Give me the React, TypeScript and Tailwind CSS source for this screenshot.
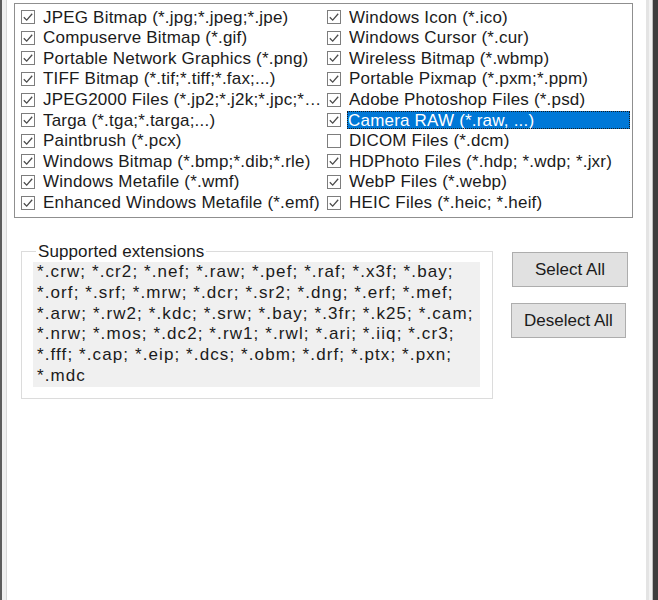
import React from "react";

const leftItems = [
  { label: "JPEG Bitmap (*.jpg;*.jpeg;*.jpe)", checked: true },
  { label: "Compuserve Bitmap (*.gif)", checked: true },
  { label: "Portable Network Graphics (*.png)", checked: true },
  { label: "TIFF Bitmap (*.tif;*.tiff;*.fax;...)", checked: true },
  { label: "JPEG2000 Files (*.jp2;*.j2k;*.jpc;*.jpf;*.jpx)", checked: true },
  { label: "Targa (*.tga;*.targa;...)", checked: true },
  { label: "Paintbrush (*.pcx)", checked: true },
  { label: "Windows Bitmap (*.bmp;*.dib;*.rle)", checked: true },
  { label: "Windows Metafile (*.wmf)", checked: true },
  { label: "Enhanced Windows Metafile (*.emf)", checked: true },
];

const rightItems = [
  { label: "Windows Icon (*.ico)", checked: true },
  { label: "Windows Cursor (*.cur)", checked: true },
  { label: "Wireless Bitmap (*.wbmp)", checked: true },
  { label: "Portable Pixmap (*.pxm;*.ppm)", checked: true },
  { label: "Adobe Photoshop Files (*.psd)", checked: true },
  { label: "Camera RAW (*.raw, ...)", checked: true, selected: true },
  { label: "DICOM Files (*.dcm)", checked: false },
  { label: "HDPhoto Files (*.hdp; *.wdp; *.jxr)", checked: true },
  { label: "WebP Files (*.webp)", checked: true },
  { label: "HEIC Files (*.heic; *.heif)", checked: true },
];

const extensionLines = [
  "*.crw; *.cr2; *.nef; *.raw; *.pef; *.raf; *.x3f; *.bay;",
  "*.orf; *.srf; *.mrw; *.dcr; *.sr2; *.dng; *.erf; *.mef;",
  "*.arw; *.rw2; *.kdc; *.srw; *.bay; *.3fr; *.k25; *.cam;",
  "*.nrw; *.mos; *.dc2; *.rw1; *.rwl; *.ari; *.iiq; *.cr3;",
  "*.fff; *.cap; *.eip; *.dcs; *.obm; *.drf; *.ptx; *.pxn;",
  "*.mdc",
];

const CheckBox = ({ checked }: { checked: boolean }) => (
  <svg width="14" height="14" viewBox="0 0 14 14" className="shrink-0">
    <rect x="0.5" y="0.5" width="13" height="13" fill="#fff" stroke="#7d7d7d" />
    {checked && (
      <path d="M2.8 7.2 L5.7 10.1 L11.2 3.8" fill="none" stroke="#4a4a4a" strokeWidth="1.3" />
    )}
  </svg>
);

type Item = { label: string; checked: boolean; selected?: boolean };

const Row = ({ item }: { item: Item }) => (
  <div className="flex items-center min-w-0 pr-[2px]">
    <CheckBox checked={item.checked} />
    {item.selected ? (
      <span className="ml-[6px] flex-1 h-[18px] flex items-center pl-[1px] bg-[#0078d7] text-white outline outline-1 outline-dotted outline-[#1a1a1a] -outline-offset-1 whitespace-nowrap overflow-hidden">
        {item.label}
      </span>
    ) : (
      <span className="ml-[8px] whitespace-nowrap overflow-hidden text-ellipsis">{item.label}</span>
    )}
  </div>
);

export default function App() {
  return (
    <div
      className="w-[658px] h-[600px] bg-white flex text-[17px] tracking-[0.2px] text-[#1b1b1b] overflow-hidden"
      style={{ fontFamily: '"Liberation Sans", Arial, sans-serif' }}
    >
      {/* left window edge */}
      <div className="w-[2px] bg-[#5c5c5c]" />
      <div className="w-[4px] bg-[#efefef]" />
      <div className="w-px bg-[#d8d8d8]" />

      <div className="flex-1 flex flex-col">
        {/* file type list */}
        <div className="mt-[3px] ml-[7px] w-[619px] h-[215px] border border-[#8f8f8f] pt-[3px] pl-[6px]">
          <div className="grid grid-flow-col grid-cols-[306px_1fr] grid-rows-[repeat(10,20.6px)]">
            {leftItems.map((item) => (
              <Row key={item.label} item={item} />
            ))}
            {rightItems.map((item) => (
              <Row key={item.label} item={item} />
            ))}
          </div>
        </div>

        <div className="flex mt-[33px]">
          {/* supported extensions group */}
          <div className="relative ml-[14px] w-[472px] h-[148px] border border-[#dcdcdc] pt-[10px] pl-[11px]">
            <span className="absolute -top-[10px] left-[14px] px-[2px] bg-white leading-[20px] tracking-[0.1px]">
              Supported extensions
            </span>
            <div className="w-[447px] h-[125px] bg-[#f0f0f0] pl-[4px] leading-[20.8px] tracking-[1.1px]">
              {extensionLines.map((line) => (
                <div key={line} className="whitespace-nowrap">
                  {line}
                </div>
              ))}
            </div>
          </div>

          {/* buttons */}
          <div className="ml-[19px] mt-px flex flex-col gap-[16px] tracking-normal">
            <button className="w-[116px] h-[35px] bg-[#e1e1e1] border border-[#adadad]">Select All</button>
            <button className="w-[115px] h-[35px] -ml-[1px] bg-[#e1e1e1] border border-[#adadad]">Deselect All</button>
          </div>
        </div>
      </div>

      {/* right window edge */}
      <div className="w-px bg-white" />
      <div className="w-[3px] bg-[#e4e4e4]" />
      <div className="w-[3px] bg-[#f2f2f2]" />
      <div className="w-px bg-[#bdbdbd]" />
      <div className="w-[5px] bg-[#3d3d3d]" />
    </div>
  );
}
